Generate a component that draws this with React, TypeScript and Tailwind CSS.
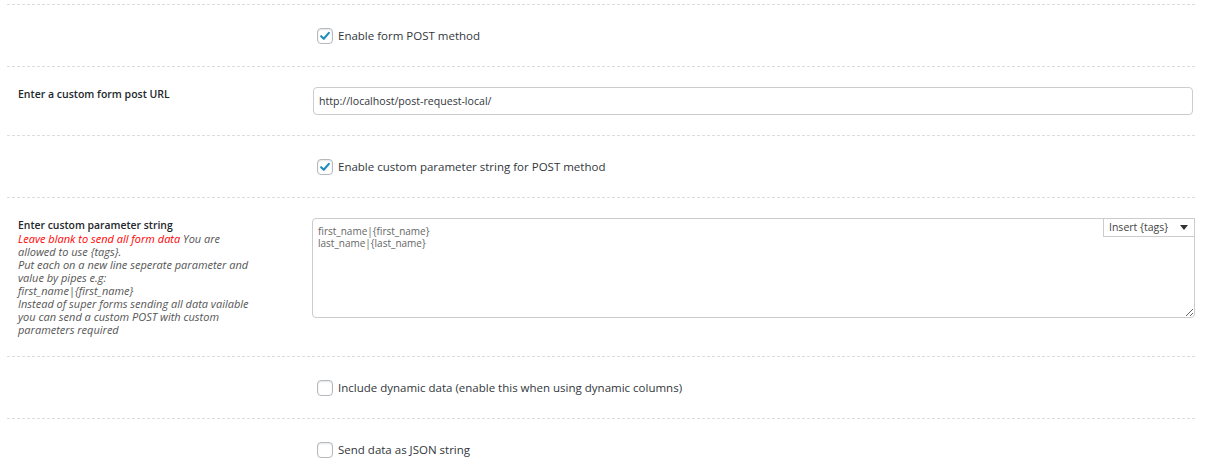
import { ReactNode } from "react"

function Check({ checked }: { checked?: boolean }) {
	return (
		<span className="flex h-4 w-4 shrink-0 items-center justify-center rounded-[4px] border border-[#b4b9be] bg-white shadow-[inset_0_1px_2px_rgba(0,0,0,0.1)]">
			{checked && (
				<svg viewBox="0 0 16 16" className="h-[14px] w-[14px]">
					<path
						d="M3.6 8.2 L6.6 11.2 L12.4 4.4"
						fill="none"
						stroke="#1e8cbe"
						strokeWidth="2.4"
						strokeLinecap="round"
						strokeLinejoin="round"
					/>
				</svg>
			)}
		</span>
	)
}

function Row({ label, children }: { label?: ReactNode; children: ReactNode }) {
	return (
		<div className="flex border-t border-dashed border-[#dddddd] py-5">
			<div className="w-[306px] shrink-0 pl-[11px] pr-4">{label}</div>
			<div className="flex-1">{children}</div>
		</div>
	)
}

function CheckRow({ text, checked }: { text: string; checked?: boolean }) {
	return (
		<Row>
			<label className="flex h-[21px] items-center gap-[5px] pl-[4px] text-[11.5px] text-[#32373c]">
				<Check checked={checked} />
				<span>{text}</span>
			</label>
		</Row>
	)
}

export default function App() {
	return (
		<div className="min-h-screen bg-white pt-1 font-['Open_Sans',sans-serif]">
			<div className="ml-[7px] w-[1188px]">
				<CheckRow checked text="Enable form POST method" />

				<Row
					label={
						<div className="text-[10.5px] leading-[14px] font-semibold text-[#23282d]">
							Enter a custom form post URL
						</div>
					}
				>
					<input
						readOnly
						defaultValue="http://localhost/post-request-local/"
						className="h-[28px] w-[880px] rounded-[4px] border border-[#cccccc] bg-white px-[5px] text-[10.6px] text-[#32373c] outline-none"
					/>
				</Row>

				<CheckRow checked text="Enable custom parameter string for POST method" />

				<Row
					label={
						<div className="text-[11px] leading-[13px]">
							<div className="text-[10.4px] leading-[14px] font-semibold text-[#23282d]">
								Enter custom parameter string
							</div>
							<div className="italic text-[#555555]">
								<span className="text-[#ff0000]">Leave blank to send all form data</span> You are
								<br />
								allowed to use {"{tags}"}.
								<br />
								Put each on a new line seperate parameter and
								<br />
								value by pipes e.g:
								<br />
								first_name|{"{first_name}"}
								<br />
								Instead of super forms sending all data vailable
								<br />
								you can send a custom POST with custom
								<br />
								parameters required
							</div>
						</div>
					}
				>
					<div className="relative -ml-px w-[883px]">
						<textarea
							readOnly
							defaultValue={"first_name|{first_name}\nlast_name|{last_name}"}
							className="block h-[100px] w-full rounded-[4px] border border-[#cccccc] bg-white px-[5px] pt-[6px] text-[10px] leading-[12px] text-[#666666] outline-none"
						/>
						<div className="absolute right-0 top-0 flex h-[19px] w-[92px] items-center justify-between border border-[#cccccc] bg-white pl-[5px] pr-[6px] text-[10.5px] text-[#444444]">
							<span>Insert {"{tags}"}</span>
							<svg viewBox="0 0 10 6" className="h-[5px] w-[8px]">
								<path d="M0 0 L10 0 L5 6 Z" fill="#333333" />
							</svg>
						</div>
					</div>
				</Row>

				<CheckRow text="Include dynamic data (enable this when using dynamic columns)" />

				<CheckRow text="Send data as JSON string" />
			</div>
		</div>
	)
}
